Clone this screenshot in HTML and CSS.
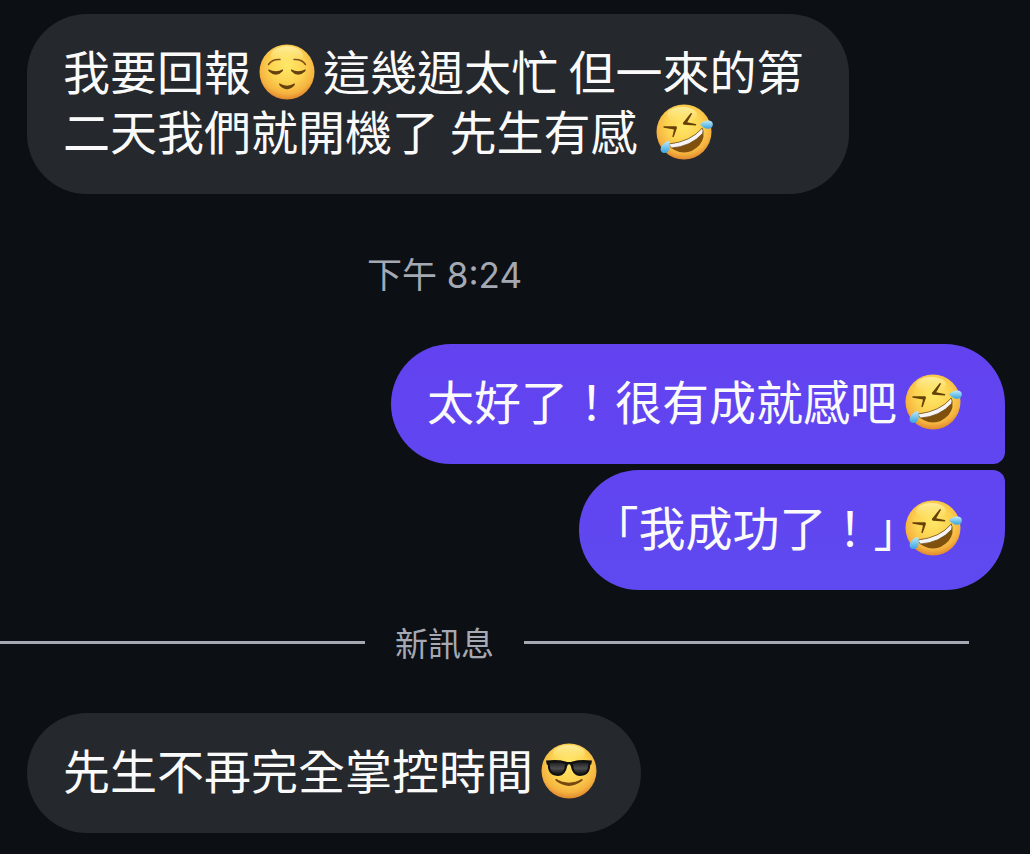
FILE: index.html
```html
<!DOCTYPE html>
<html lang="zh-Hant">
<head>
    <meta charset="UTF-8">
    <meta name="viewport" content="width=device-width, initial-scale=1.0">
    <title>訊息</title>
    <link rel="stylesheet" href="styles.css">
</head>
<body>
    <svg class="sprite" aria-hidden="true">
        <defs>
            <radialGradient id="skin" cx="0.5" cy="0.38" r="0.64">
                <stop offset="0" stop-color="#ffe868"/>
                <stop offset="0.5" stop-color="#fcd250"/>
                <stop offset="0.8" stop-color="#f5b340"/>
                <stop offset="1" stop-color="#dd7f2a"/>
            </radialGradient>
            <linearGradient id="shine" x1="0" y1="0" x2="0" y2="1">
                <stop offset="0" stop-color="#fffbc0" stop-opacity="0.7"/>
                <stop offset="1" stop-color="#fff08a" stop-opacity="0"/>
            </linearGradient>
            <linearGradient id="tear" x1="0" y1="0" x2="0" y2="1">
                <stop offset="0" stop-color="#bdeafa"/>
                <stop offset="1" stop-color="#38a4dd"/>
            </linearGradient>
            <linearGradient id="lens" x1="0" y1="0" x2="0" y2="1">
                <stop offset="0" stop-color="#202022"/>
                <stop offset="0.5" stop-color="#4c4d4f"/>
                <stop offset="1" stop-color="#111"/>
            </linearGradient>
        </defs>
        <symbol id="relieved" viewBox="0 0 60 60">
            <circle cx="30" cy="30" r="27.5" fill="url(#skin)"/>
            <ellipse cx="30" cy="13" rx="16" ry="9" fill="url(#shine)"/>
            <g fill="none" stroke="#81501a" stroke-width="1.5" stroke-linecap="round">
                <path d="M11.5 22.5Q15 17 23 17.5"/>
                <path d="M48.5 22.5Q45 17 37 17.5"/>
            </g>
            <g fill="#65400f">
                <path d="M11.5 27.2Q19 31.5 25.8 27.2Q26.5 28 25.4 29.5Q19 36.2 12 29.5Q10.8 28 11.5 27.2Z"/>
                <path d="M48.5 27.2Q41 31.5 34.2 27.2Q33.5 28 34.6 29.5Q41 36.2 48 29.5Q49.2 28 48.5 27.2Z"/>
                <path d="M22.3 41.3Q30 46 37.7 41.3Q38.3 42 37.3 43.4Q30 51 22.7 43.4Q21.7 42 22.3 41.3Z"/>
            </g>
        </symbol>
        <symbol id="rofl" viewBox="0 0 60 60">
            <circle cx="30" cy="30" r="27.5" fill="url(#skin)"/>
            <ellipse cx="28" cy="13" rx="15" ry="8" fill="url(#shine)"/>
            <g fill="#654008">
                <path d="M9.6 24.2L22 24.2Q23.4 24.5 22.8 26.2L19.8 34.8Q18.6 35.8 18.4 34.4L20 27.5L10 25.8Q8.6 24.8 9.6 24.2Z"/>
                <path d="M36.9 11L29 20.8Q28.4 22.4 30 22.8L41.8 23.6Q43 22.8 41.8 22L33.2 20.2L37.9 12Q38 10.7 36.9 11Z"/>
            </g>
            <path d="M15 42Q37 39.5 48.3 26Q52 35 45.5 43Q34 55 20.5 48Q16.5 46 15 42Z" fill="#80500d"/>
            <path d="M15 42Q37 39.5 48.3 26Q49.6 29 48.6 31.5Q37 44.5 17.5 46Q15.8 44.5 15 42Z" fill="#f5f4f6" stroke="#69420c" stroke-width="0.7"/>
            <path d="M46 22.3Q50 18.2 55 18.6Q59.2 19.4 58.8 23Q58 26.8 54 26.8Q49.5 26.7 46 22.3Z" fill="url(#tear)"/>
            <path d="M15.2 38.8Q8.5 40.5 6.7 46Q6 50.2 9.8 51Q14 51.4 15.5 47Q16.3 43.5 15.2 38.8Z" fill="url(#tear)"/>
        </symbol>
        <symbol id="sunglasses" viewBox="0 0 60 60">
            <circle cx="30" cy="30" r="27.5" fill="url(#skin)"/>
            <ellipse cx="30" cy="12" rx="16" ry="8" fill="url(#shine)"/>
            <path d="M7 19.6Q18 18 26.5 20.4Q30 21.4 33.5 20.4Q42 18 53 19.6L52.3 23.2L51.2 24Q51 35 40.5 35Q33.5 34.5 31.9 25.5Q31.5 23.3 30 23.3Q28.5 23.3 28.1 25.5Q26.5 34.5 19.5 35Q9 35 8.8 24L7.7 23.2Z" fill="#111"/>
            <path d="M10.5 22Q18.5 20.5 26 22.8Q25.5 33 19 33.3Q10.8 33 10.5 22Z" fill="url(#lens)"/>
            <path d="M49.5 22Q41.5 20.5 34 22.8Q34.5 33 41 33.3Q49.2 33 49.5 22Z" fill="url(#lens)"/>
            <path d="M17 37.8Q30 45.5 43 37.8Q44.3 38.2 43.3 39.8Q30 50 16.7 39.8Q15.7 38.2 17 37.8Z" fill="#754711"/>
        </symbol>
    </svg>

    <main class="chat">
        <div class="message received">我要回報<svg class="emoji" role="img" aria-label="relieved"><use href="#relieved"/></svg>這幾週太忙 但一來的第二天我們就開機了 先生有感 <svg class="emoji" role="img" aria-label="rofl"><use href="#rofl"/></svg></div>

        <div class="time">下午 8:24</div>

        <div class="message sent first">太好了！很有成就感吧<svg class="emoji" role="img" aria-label="rofl"><use href="#rofl"/></svg></div>
        <div class="message sent last"><span class="bracket">「</span>我成功了！<span class="bracket">」</span><svg class="emoji" role="img" aria-label="rofl"><use href="#rofl"/></svg></div>

        <div class="divider">新訊息</div>

        <div class="message received">先生不再完全掌控時間<svg class="emoji" role="img" aria-label="sunglasses"><use href="#sunglasses"/></svg></div>
    </main>
</body>
</html>
```
FILE: styles.css
```css
body {
    margin: 0;
    background-color: #0c1014;
    color: #fafafa;
    font-family: "Noto Sans CJK TC", sans-serif;
    overflow-x: hidden;
}
.sprite {
    position: absolute;
    width: 0;
    height: 0;
}
.chat {
    display: flex;
    flex-direction: column;
    padding: 14px 25px 21px 27px;
}
.message {
    box-sizing: border-box;
    max-width: 84%;
    padding: 26px 36px 34px;
    border-radius: 60px;
    font-size: 47px;
    line-height: 60px;
}
.received {
    align-self: flex-start;
    background-color: #25282d;
}
.sent {
    align-self: flex-end;
    background: linear-gradient(#6342f0, #6046f0);
}
.first {
    border-bottom-right-radius: 12px;
    margin-bottom: 6px;
}
.last {
    border-top-right-radius: 12px;
    background: linear-gradient(#6144f0, #5e4af0);
}
.emoji {
    width: 60px;
    height: 60px;
    margin: 0 6px -10px;
    vertical-align: -2px;
}
.bracket {
    font-feature-settings: "halt";
}
.time,
.divider {
    margin-left: -107px;
    margin-right: 36px;
    color: #a4a9b4;
}
.time {
    padding: 56px 0 44px;
    font-family: Inter, "Noto Sans CJK TC", sans-serif;
    font-size: 35px;
    line-height: 50px;
    text-align: center;
}
.divider {
    display: flex;
    align-items: center;
    gap: 30px;
    padding: 27px 0 46px;
    font-size: 33px;
    line-height: 50px;
}
.divider::before,
.divider::after {
    content: "";
    flex: 1;
    height: 3px;
    background-color: #a4a9b4;
}
```
